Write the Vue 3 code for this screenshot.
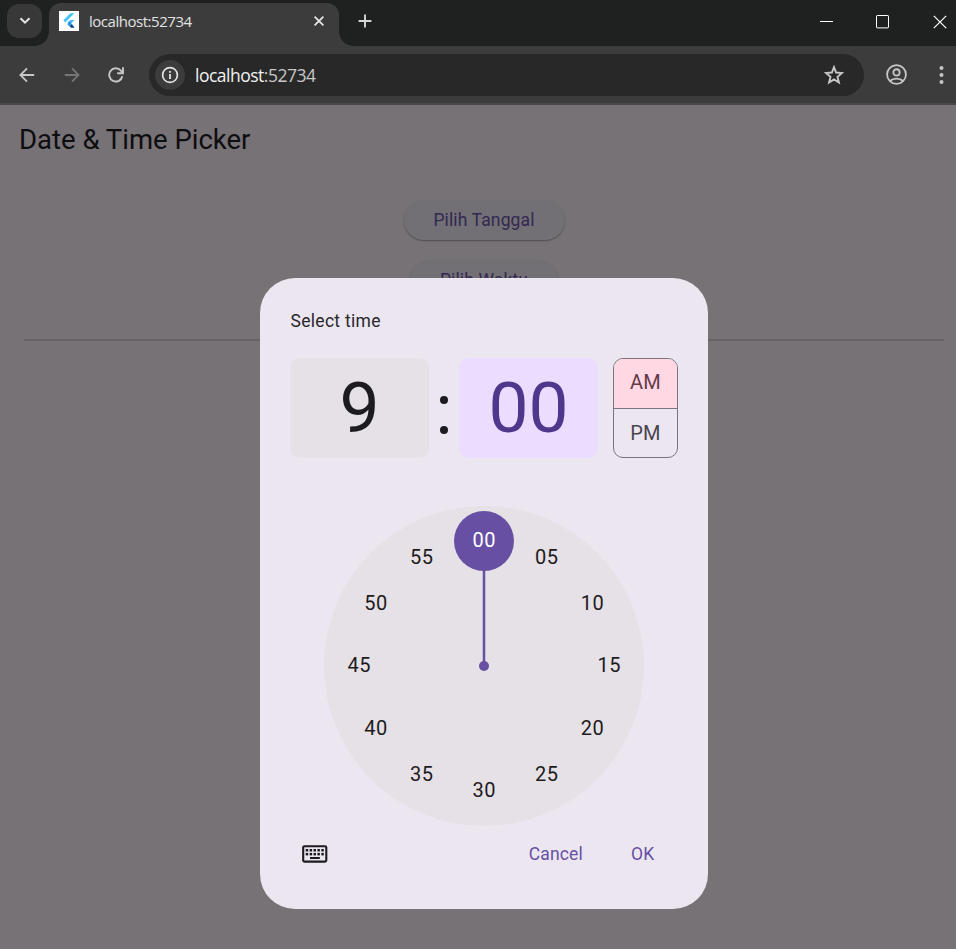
<script setup>
const minutes = Array.from({ length: 12 }, (_, i) => {
  const angle = (i * Math.PI) / 6
  return {
    label: String(i * 5).padStart(2, '0'),
    x: 160 + 125 * Math.sin(angle),
    y: 160 - 125 * Math.cos(angle),
  }
})
const keyColumns = [0, 1, 2, 3, 4]
</script>

<template>
  <div class="window">
    <header class="tabstrip">
      <button class="tab-search" aria-label="Search tabs">
        <svg width="14" height="10" viewBox="0 0 14 10"><path d="M2.5 2.2 7 6.7l4.5-4.5" fill="none" stroke="#e3e3e3" stroke-width="2" /></svg>
      </button>
      <div class="tab">
        <span class="favicon">
          <svg width="20" height="20" viewBox="0 0 20 20">
            <path d="M11.4 2.2h4L6.3 11.4 4.3 9.3z" fill="#45c5f8" />
            <path d="M11.4 9h4l-4.7 4.9-2.2-2.3z" fill="#45b8f5" />
            <path d="m8.3 13.1 2.3-2.3 2.2 2.3-2.2 2.3z" fill="#2196e0" />
            <path d="m10.6 15.4 2.2-2.3 2.8 3.7h-3.4z" fill="#08408f" />
          </svg>
        </span>
        <span class="tab-title">localhost:52734</span>
        <svg class="tab-close" width="12" height="12" viewBox="0 0 12 12"><path d="m1.6 1.6 8.8 8.8m0-8.8-8.8 8.8" stroke="#e3e3e3" stroke-width="1.8" /></svg>
      </div>
      <svg class="new-tab" width="14" height="14" viewBox="0 0 14 14"><path d="M7 .6v12.8M.6 7h12.8" stroke="#d6d6d6" stroke-width="1.9" /></svg>
      <div class="window-controls">
        <svg width="14" height="14" viewBox="0 0 14 14"><path d="M0 6.5h13" stroke="#fff" /></svg>
        <svg width="14" height="14" viewBox="0 0 14 14"><rect x=".5" y=".5" width="12" height="12.4" rx=".7" fill="none" stroke="#fff" /></svg>
        <svg width="15" height="14" viewBox="0 0 15 14"><path d="m1.8.8 12.4 12.4m0-12.4L1.8 13.2" stroke="#fff" stroke-width="1.2" /></svg>
      </div>
    </header>

    <nav class="toolbar">
      <div class="nav-buttons">
        <svg width="16" height="17" viewBox="0 0 16 17"><path d="M15.2 8H1.8M8 1.4 1.4 8 8 14.6" fill="none" stroke="#c7c7c7" stroke-width="1.8" /></svg>
        <svg width="16" height="17" viewBox="0 0 16 17"><path d="M.8 8h13.4M8 1.4 14.6 8 8 14.6" fill="none" stroke="#757575" stroke-width="1.8" /></svg>
        <svg width="16" height="17" viewBox="0 0 16 17"><path d="M14.3 9.2A6.6 6.6 0 1 1 12.9 3.7L15 6M15 .3v5.9H9.2" fill="none" stroke="#c7c7c7" stroke-width="1.9" /></svg>
      </div>
      <div class="omnibox">
        <span class="site-info">
          <svg width="18" height="18" viewBox="0 0 18 18">
            <circle cx="9" cy="9" r="7.4" fill="none" stroke="#e3e3e3" stroke-width="1.7" />
            <path d="M9 8v5M9 5v1.7" stroke="#e3e3e3" stroke-width="1.8" />
          </svg>
        </span>
        <span class="url">localhost<span class="port">:52734</span></span>
        <svg class="star" width="20" height="20" viewBox="0 0 20 20"><path d="m10 2.2 2.1 5.3 5.9.5-4.5 3.8 1.4 5.7-4.9-3.1-4.9 3.1 1.4-5.7L2 8l5.9-.5z" fill="none" stroke="#c7c7c7" stroke-width="1.9" /></svg>
      </div>
      <svg class="profile" width="21" height="22" viewBox="0 0 20 21">
        <g fill="none" stroke="#c7c7c7" stroke-width="1.7"><circle cx="10" cy="10" r="9" /><circle cx="10" cy="8" r="3" /><path d="M3.7 16.2c3.4-3 9.2-3 12.6 0" /></g>
      </svg>
      <svg class="menu" width="5" height="19" viewBox="0 0 5 19"><g fill="#c7c7c7"><circle cx="2.5" cy="2" r="2" /><circle cx="2.5" cy="9" r="2" /><circle cx="2.5" cy="16" r="2" /></g></svg>
    </nav>

    <main class="page">
      <h1>Date &amp; Time Picker</h1>
      <div class="actions">
        <button class="elevated date">Pilih Tanggal</button>
        <button class="elevated time">Pilih Waktu</button>
      </div>
      <hr />
      <section class="dialog" role="dialog">
        <h2>Select time</h2>
        <div class="time-row">
          <div class="digit">9</div>
          <div class="colon"><i></i><i></i></div>
          <div class="digit selected">00</div>
          <div class="period">
            <div class="am">AM</div>
            <div class="pm">PM</div>
          </div>
        </div>
        <svg class="dial" width="320" height="320" viewBox="0 0 320 320">
          <circle cx="160" cy="160" r="160" class="dial-face" />
          <path d="M160 160V60" stroke="#6750a4" stroke-width="2.5" />
          <circle cx="160" cy="160" r="5" fill="#6750a4" />
          <circle cx="160" cy="35" r="30" fill="#6750a4" />
          <text v-for="(m, i) in minutes" :key="m.label" :x="m.x + 0.3" :y="m.y + 6.3" :class="{ current: i === 0 }">{{ m.label }}</text>
        </svg>
        <footer>
          <svg class="keyboard" width="26" height="18" viewBox="0 0 26 18">
            <rect x="1.2" y="1.2" width="23.1" height="15.4" rx="1.4" fill="none" stroke="#1d1b20" stroke-width="2.1" />
            <g fill="#1d1b20">
              <template v-for="c in keyColumns" :key="c">
                <rect :x="3.7 + c * 3.9" y="4" width="2.5" height="2.5" />
                <rect :x="3.7 + c * 3.9" y="7.9" width="2.5" height="2.5" />
              </template>
              <rect x="8" y="12" width="9.8" height="2" />
            </g>
          </svg>
          <span class="cancel">Cancel</span>
          <span class="ok">OK</span>
        </footer>
      </section>
    </main>
  </div>
</template>

<style>
body { margin: 0; overflow: hidden; }
</style>

<style scoped>
* { box-sizing: border-box; }
.window { width: 956px; height: 949px; overflow: hidden; background: #777276; font-family: Roboto, sans-serif; }
button { border: 0; padding: 0; font: inherit; }
svg { display: block; flex: none; }

.tabstrip { display: flex; height: 46px; padding-left: 7px; background: #1f2120; }
.tab-search { display: flex; align-items: center; justify-content: center; width: 35px; height: 34px; margin-top: 4px; border-radius: 12px; background: #383838; }
.tab { position: relative; display: flex; align-items: center; width: 290px; height: 43px; margin: 3px 0 0 7px; padding: 0 14px 7px 10px; border-radius: 12px 12px 0 0; background: #3c3c3c; }
.tab::before, .tab::after { content: ''; position: absolute; bottom: 0; width: 14px; height: 14px; }
.tab::before { left: -14px; background: radial-gradient(circle at 0 0, transparent 13.5px, #3c3c3c 14px); }
.tab::after { right: -14px; background: radial-gradient(circle at 100% 0, transparent 13.5px, #3c3c3c 14px); }
.favicon { width: 20px; height: 20px; background: #fff; }
.tab-title { margin-left: 10px; color: #e3e3e3; font: 15px/20px "Open Sans", sans-serif; letter-spacing: -0.47px; }
.tab-close { margin-left: auto; }
.new-tab { margin: 14px 0 0 19px; }
.window-controls { display: flex; gap: 42px; margin: 15px 9px 0 auto; }

.toolbar { display: flex; align-items: center; height: 59px; padding: 1px 12px 0 19px; border-bottom: 2px solid #484848; background: #3c3c3c; }
.nav-buttons { display: flex; gap: 28.7px; width: 130px; }
.omnibox { display: flex; align-items: center; width: 715px; height: 42px; padding: 0 20px 0 6px; border-radius: 21px; background: #282828; }
.site-info { display: flex; align-items: center; justify-content: center; width: 30px; height: 30px; border-radius: 50%; background: #3c3c3c; }
.url { margin-left: 10px; color: #f1f1f1; font: 17.5px/24px "Open Sans", sans-serif; letter-spacing: -0.5px; }
.port { color: #c7c7c7; }
.star { margin-left: auto; }
.profile { margin-left: 22px; }
.menu { margin-left: auto; }

.page { position: relative; width: 968px; height: 844px; }
h1 { height: 70px; margin: 0; padding-left: 19px; color: #0e0d10; font-size: 27.5px; font-weight: 400; line-height: 70px; }
.actions { display: flex; flex-direction: column; align-items: center; gap: 20px; padding-top: 25px; }
.elevated { height: 40px; border-radius: 20px; color: #332852; background: #727074; box-shadow: 0 1px 1.5px rgba(0, 0, 0, .32); font-size: 17.5px; letter-spacing: .125px; }
.date { width: 161px; }
.time { width: 148px; }
hr { height: 2px; margin: 39px 24px 0; border: 0; background: #656166; }

.dialog { position: absolute; left: 260px; top: 173px; display: flex; flex-direction: column; width: 448px; height: 631px; padding: 30px; border-radius: 35px; background: #ece6f0; }
h2 { height: 25px; margin: 0; padding: 1px 0 0 .5px; color: #29272c; font-size: 17.5px; font-weight: 400; line-height: 25px; letter-spacing: .3px; }
.time-row { display: flex; height: 100px; margin-top: 25px; }
.digit { width: 139px; border-radius: 10px; color: #1d1b20; background: #e5e1e6; font-size: 71.25px; line-height: 100px; text-align: center; }
.digit.selected { color: #4f378b; background: #eaddff; }
.colon { display: flex; flex-direction: column; align-items: center; gap: 22px; width: 30px; padding-top: 38px; }
.colon i { width: 8px; height: 8px; border-radius: 50%; background: #1d1b20; }
.period { width: 65px; margin-left: 15px; overflow: hidden; border: 1px solid #79747e; border-radius: 10px; color: #49454f; font-size: 20px; line-height: 47px; letter-spacing: .19px; text-align: center; }
.am { height: 50px; border-bottom: 1px solid #79747e; color: #633b48; background: #ffd8e4; }
.pm { padding-top: 1px; }
.dial { align-self: center; margin-top: 48px; }
.dial-face { fill: #e5e1e6; }
.dial text { fill: #1d1b20; font-size: 20px; letter-spacing: .625px; text-anchor: middle; }
.dial .current { fill: #fff; }
footer { display: flex; align-items: center; height: 50px; margin-top: 3px; padding-left: 12.4px; color: #6750a4; font-size: 17.5px; letter-spacing: .125px; }
.cancel { margin-left: auto; }
.ok { margin: 0 23.7px 0 48.2px; }
</style>
